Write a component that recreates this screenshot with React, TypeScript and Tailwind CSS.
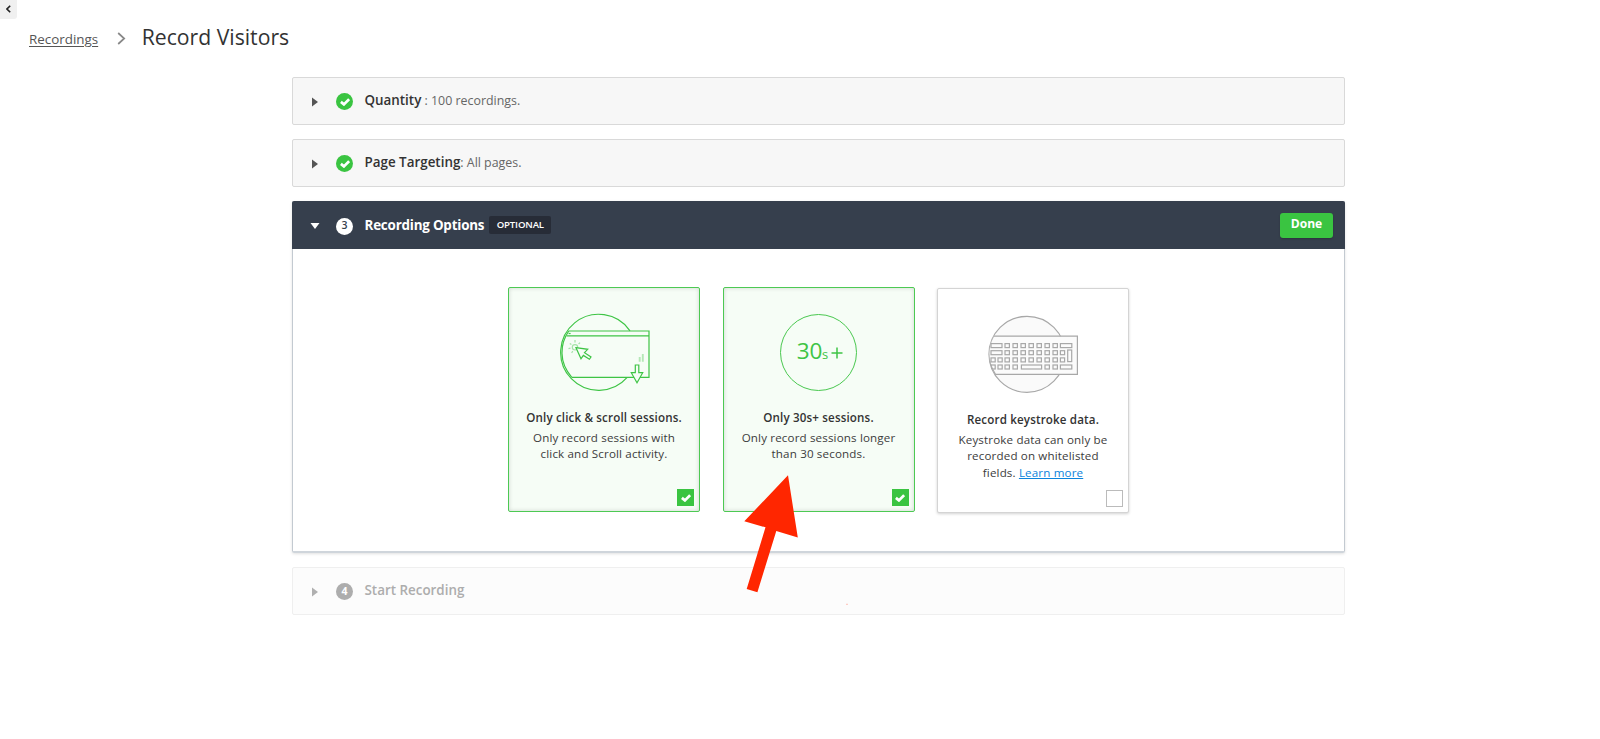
import type { ReactNode } from "react";

const keyRows = [
  { y: 30.6, keys: [[9, 11], [23, 4.4], [31, 4.4], [39, 4.4], [47, 4.4], [55, 4.4], [63, 4.4], [71, 4.4], [78.4, 11.4]] },
  { y: 37.7, keys: [[9, 11], [23, 4.4], [31, 4.4], [39, 4.4], [47, 4.4], [55, 4.4], [63, 4.4], [71, 4.4], [78.4, 4.2]] },
  { y: 44.9, keys: [[9, 4.2], [16, 4.2], [23, 4.4], [31, 4.4], [39, 4.4], [47, 4.4], [55, 4.4], [63, 4.4], [71, 4.4], [78.4, 4.2]] },
  { y: 52, keys: [[9, 4.2], [16, 4.2], [23, 4.4], [31, 4.4], [39.4, 20.2], [63, 4.4], [71, 4.4], [78.4, 11.4]] },
];

function Check({ className }: { className: string }) {
  return (
    <svg viewBox="0 0 10 8" className={className} fill="none" stroke="#fff" strokeWidth="2.7">
      <path d="M.9 3.9 3.9 6.4 9.1 1.2" />
    </svg>
  );
}

function ClickScrollIcon() {
  return (
    <svg width="96" height="80" viewBox="0 0 96 80" className="ml-[5px]" fill="none" stroke="#3ec445" strokeWidth="1.2">
      <path d="M71 18.8A38 38 0 1 0 68.2 65.4" />
      <path d="M9.5 19H90V65.3H12.8M7.6 23.8H90" />
      <path d="M9.7 19C1 32 -0.6 50 12.8 65.3" />
      <path d="M9.6 21.5h2" />
      <g stroke="#a5e3a8">
        <circle cx="16" cy="35.3" r="2.7" />
        <path d="M16 28v2.4M10.8 31.4l1.6 1.2M9.5 36.6l2 -.4M12.6 40.8l1.2 -1.6M21 30.6l-1.4 1.4" />
      </g>
      <path d="M17 35.7 28.7 37.3 25.5 40.7 32 45 30.4 47.3 24.4 43.4 22 46.7Z" fill="#f6fdf6" />
      <path d="M80.7 45v4.7M83.8 42v7.7" stroke="#b4e7b6" strokeWidth="1.9" />
      <path d="M76.3 53h3.5v7.7h3.9L78 70.7 72.3 60.7h4Z" fill="#f6fdf6" />
    </svg>
  );
}

function ThirtySecondsIcon() {
  return (
    <div className="mx-auto mt-[2px] flex h-[77px] w-[77px] items-baseline justify-center rounded-full border border-[#4ac850] pl-[3px] text-[#3ec445]">
      <span className="text-[22.5px] leading-[71px] tracking-[-0.3px]">30</span>
      <span className="text-[13px]">s</span>
      <svg width="12" height="12" viewBox="0 0 12 12" className="ml-[3px]" stroke="#3ec445" strokeWidth="1.5">
        <path d="M.5 6h11M6 .5v11" />
      </svg>
    </div>
  );
}

function KeyboardIcon() {
  return (
    <svg width="96" height="80" viewBox="0 0 96 80" className="-ml-[7px]" fill="none" stroke="#a8a8a8" strokeWidth="1.2">
      <clipPath id="lens">
        <path d="M45 2.3A38 38 0 1 0 45 78.3H96V2.3Z" />
      </clipPath>
      <circle cx="45" cy="40.3" r="38" fill="#fafafa" />
      <g clipPath="url(#lens)">
        <path d="M11.5 22.2H95.4V60.4H13.5C5 47 5 34 11.5 22.2Z" fill="#fbfbfb" />
        {keyRows.map((row) =>
          row.keys.map(([x, w]) => <rect key={`${row.y}-${x}`} x={x} y={row.y - 1} width={w} height="4" />)
        )}
        <rect x="85.7" y="36" width="4" height="11.6" />
      </g>
    </svg>
  );
}

function Arrow({ className }: { className: string }) {
  return (
    <svg width="6" height="10" viewBox="0 0 6 10" className={className}>
      <path d="M0 .5 6 5 0 9.5Z" fill="currentColor" />
    </svg>
  );
}

function ClosedStep({ children }: { children: ReactNode }) {
  return (
    <div className="mb-[14px] flex h-12 items-center rounded-[2px] border border-[#d9d9d9] bg-[#f7f7f7] pl-[19px]">
      <Arrow className="mt-[2px] text-[#555]" />
      <span className="ml-[18px] mt-px flex h-[17px] w-[17px] items-center justify-center rounded-full bg-[#3ac441]">
        <Check className="h-2 w-[10px]" />
      </span>
      <p className="ml-[11.5px] pb-px text-[12.4px] text-[#666]">{children}</p>
    </div>
  );
}

function OptionCard({ icon, title, children, checked }: { icon: ReactNode; title: string; children: ReactNode; checked?: boolean }) {
  return (
    <div
      className={
        checked
          ? "relative h-[225px] w-[192px] rounded-[2px] border border-[#4dc953] bg-[#f6fdf6] pt-6 text-center shadow-[inset_0_0_4px_rgba(0,0,0,0.16)]"
          : "relative mt-px h-[225px] w-[192px] rounded-[2px] border border-[#d4d4d4] bg-white pt-[25px] text-center shadow-[0_1px_3px_rgba(0,0,0,0.18)]"
      }
    >
      <div className="flex h-20 justify-center">{icon}</div>
      <h3 className="mt-[18px] text-[11.6px] leading-4 font-semibold tracking-[0.15px] text-[#333]">{title}</h3>
      <p className="mt-1 text-[11.6px] leading-[16.3px] tracking-[0.15px] text-[#3c3c3c]">{children}</p>
      {checked ? (
        <span className="absolute right-[5px] bottom-[5px] flex h-[17px] w-[17px] items-center justify-center bg-[#3ac441]">
          <Check className="h-2 w-[10px]" />
        </span>
      ) : (
        <span className="absolute right-[5px] bottom-[5px] h-[17px] w-[17px] border border-[#bbb] bg-white" />
      )}
    </div>
  );
}

export default function App() {
  return (
    <div className="relative h-[739px] w-[1600px] overflow-hidden bg-white font-['Open_Sans',sans-serif] text-[#333]">
      <div className="flex h-[19px] w-[17px] items-center justify-center rounded-br-[3px] bg-[#f0f0f0] pb-px">
        <svg width="5" height="8" viewBox="0 0 5 8" fill="none" stroke="#222" strokeWidth="1.6">
          <path d="M4.2 .8 1 4l3.2 3.2" />
        </svg>
      </div>

      <div className="flex h-[58px] items-baseline pl-[29px]">
        <a className="relative -top-px text-[13.4px] text-[#555] underline underline-offset-2">Recordings</a>
        <svg width="9" height="13" viewBox="0 0 9 13" className="ml-[19px]" fill="none" stroke="#888" strokeWidth="1.7">
          <path d="M1.2 1 7.2 6.5 1.2 12" />
        </svg>
        <h1 className="ml-[15.5px] text-[21.2px] leading-9">Record Visitors</h1>
      </div>

      <main className="ml-[292px] w-[1053px]">
        <ClosedStep>
          <b className="text-[13.4px] font-semibold text-[#333]">Quantity</b> : 100 recordings.
        </ClosedStep>
        <ClosedStep>
          <b className="text-[13.4px] font-semibold text-[#333]">Page Targeting</b>: All pages.
        </ClosedStep>

        <section className="mb-[14px] h-[352px] rounded-[2px] border border-t-0 border-[#c3cad1] border-b-2 border-b-[#cfd5db] shadow-[0_1px_3px_rgba(0,0,0,0.12)]">
          <header className="-mx-px flex h-12 items-center rounded-t-[2px] bg-[#363f4d] pr-3 pl-[18px] text-white">
            <svg width="10" height="6" viewBox="0 0 10 6" className="mt-[2px]">
              <path d="M.5 0h9L5 6Z" fill="#fff" />
            </svg>
            <span className="ml-4 mt-[2px] flex h-[17px] w-[17px] items-center justify-center rounded-full bg-white text-[10.5px] font-semibold text-[#363e4d]">3</span>
            <h2 className="ml-[11.5px] text-[13.4px] font-bold tracking-[-0.2px]">Recording Options</h2>
            <span className="ml-[5px] flex h-[18px] w-[62px] items-center justify-center rounded-[2px] bg-[#272c37] text-[9.6px] font-semibold tracking-[-0.15px]">OPTIONAL</span>
            <button className="ml-auto h-[25px] w-[53px] rounded-[3px] bg-[#3ac441] pb-px text-[12.1px] font-bold shadow-[0_1px_2px_rgba(0,0,0,0.2)]">Done</button>
          </header>

          <div className="flex items-start justify-center gap-[22.5px] pt-[38px]">
            <OptionCard checked icon={<ClickScrollIcon />} title="Only click & scroll sessions.">
              Only record sessions with
              <br />
              click and Scroll activity.
            </OptionCard>
            <OptionCard checked icon={<ThirtySecondsIcon />} title="Only 30s+ sessions.">
              Only record sessions longer
              <br />
              than 30 seconds.
            </OptionCard>
            <OptionCard icon={<KeyboardIcon />} title="Record keystroke data.">
              Keystroke data can only be
              <br />
              recorded on whitelisted
              <br />
              fields. <a className="text-[#0c84dc] underline">Learn more</a>
            </OptionCard>
          </div>
        </section>

        <div className="flex h-12 items-center rounded-[2px] border border-[#efefef] bg-[#fcfcfc] pl-[19px]">
          <Arrow className="mt-[2px] text-[#b0b0b0]" />
          <span className="ml-[18px] mt-px flex h-[17px] w-[17px] items-center justify-center rounded-full bg-[#adadad] text-[10.5px] font-bold text-white">4</span>
          <h2 className="ml-[11.5px] pb-px text-[13.4px] font-semibold text-[#adadad]">Start Recording</h2>
        </div>
      </main>

      <svg width="110" height="135" viewBox="740 472 110 135" className="pointer-events-none absolute top-[472px] left-[740px]">
        <path d="M788 475.3 744.3 521.3 765.5 527.3 746.7 589 757.4 592.2 776.3 531 797.8 537.5Z" fill="#ff2600" />
        <path d="M846 604.3h2" stroke="#ffb3a6" strokeWidth=".8" />
      </svg>
    </div>
  );
}
